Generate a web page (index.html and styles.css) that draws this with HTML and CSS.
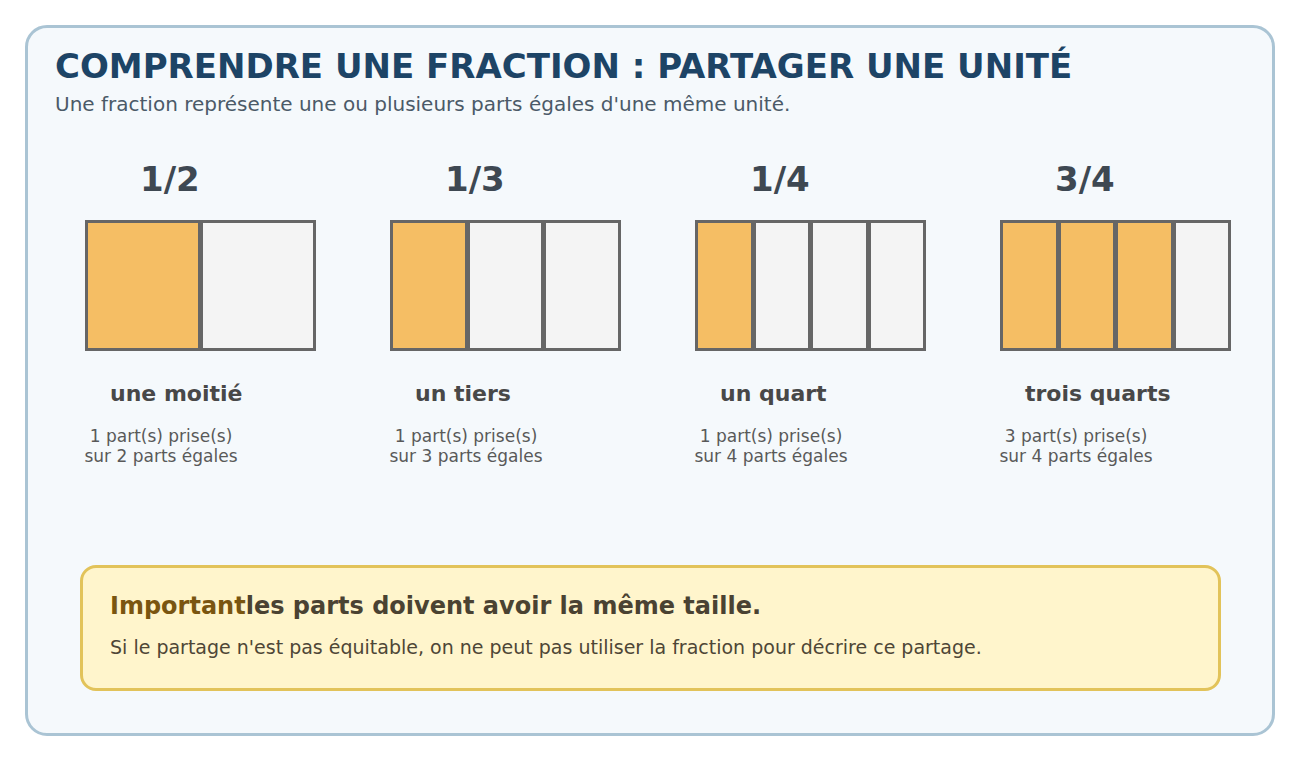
FILE: index.html
```html
<!DOCTYPE html>
<html lang="fr">
<head>
<meta charset="utf-8">
<title>Comprendre une fraction</title>
<link rel="stylesheet" href="styles.css">
</head>
<body>
<div class="page">
  <div class="card">
    <h1 class="title">COMPRENDRE UNE FRACTION : PARTAGER UNE UNITÉ</h1>
    <p class="subtitle">Une fraction représente une ou plusieurs parts égales d'une même unité.</p>

    <div class="fractions">
      <div class="frac">
        <div class="frac-label">1/2</div>
        <div class="bar">
          <span class="part on"></span><span class="part"></span>
        </div>
        <div class="frac-name">une moitié</div>
        <div class="frac-desc">1 part(s) prise(s)<br>sur 2 parts égales</div>
      </div>
      <div class="frac">
        <div class="frac-label">1/3</div>
        <div class="bar">
          <span class="part on"></span><span class="part"></span><span class="part"></span>
        </div>
        <div class="frac-name">un tiers</div>
        <div class="frac-desc">1 part(s) prise(s)<br>sur 3 parts égales</div>
      </div>
      <div class="frac">
        <div class="frac-label">1/4</div>
        <div class="bar">
          <span class="part on"></span><span class="part"></span><span class="part"></span><span class="part"></span>
        </div>
        <div class="frac-name">un quart</div>
        <div class="frac-desc">1 part(s) prise(s)<br>sur 4 parts égales</div>
      </div>
      <div class="frac">
        <div class="frac-label">3/4</div>
        <div class="bar">
          <span class="part on"></span><span class="part on"></span><span class="part on"></span><span class="part"></span>
        </div>
        <div class="frac-name">trois quarts</div>
        <div class="frac-desc">3 part(s) prise(s)<br>sur 4 parts égales</div>
      </div>
    </div>

    <div class="note">
      <div class="note-head"><strong class="note-key">Important</strong>les parts doivent avoir la même taille.</div>
      <p class="note-body">Si le partage n'est pas équitable, on ne peut pas utiliser la fraction pour décrire ce partage.</p>
    </div>
  </div>
</div>
</body>
</html>
```

FILE: styles.css
```css
html, body {
  margin: 0;
  padding: 0;
  background: #ffffff;
}

body {
  font-family: "DejaVu Sans", "Noto Sans", sans-serif;
}

.page {
  padding: 25px;
}

.card {
  box-sizing: border-box;
  width: 1250px;
  height: 711px;
  border: 3px solid #aac4d4;
  border-radius: 22px;
  background: #f5f9fc;
  padding: 18px 27px 0 27px;
}

.title {
  margin: 0;
  font-size: 34px;
  line-height: 40px;
  font-weight: bold;
  color: #1d4466;
}

.subtitle {
  margin: 6px 0 0 0;
  font-size: 20px;
  line-height: 24px;
  color: #4b5a68;
}

.fractions {
  display: flex;
  gap: 74px;
  margin: 43px 0 0 30px;
}

.frac {
  width: 231px;
}

.frac-label {
  padding-left: 55px;
  font-size: 34px;
  line-height: 40px;
  font-weight: bold;
  color: #3e4852;
}

.bar {
  margin-top: 21px;
  box-sizing: border-box;
  width: 231px;
  height: 131px;
  border: 3px solid #666666;
  background: #666666;
  display: flex;
  gap: 5px;
}

.part {
  flex: 1;
  background: #f4f4f4;
}

.part.on {
  background: #f5be64;
}

.frac-name {
  margin-top: 30px;
  padding-left: 25px;
  font-size: 22px;
  line-height: 26px;
  font-weight: bold;
  color: #484848;
}

.frac-desc {
  margin: 19px 0 0 -4px;
  width: 160px;
  white-space: nowrap;
  text-align: center;
  font-size: 17px;
  line-height: 20px;
  color: #595959;
}

.note {
  box-sizing: border-box;
  width: 1141px;
  height: 126px;
  margin: 99px 0 0 25px;
  border: 3px solid #e2c35a;
  border-radius: 16px;
  background: #fff5cc;
  padding: 24px 27px 0 27px;
}

.note-head {
  font-size: 24px;
  line-height: 28px;
  font-weight: bold;
  color: #4a4232;
}

.note-key {
  color: #7a5510;
}

.note-body {
  margin: 16px 0 0 0;
  font-size: 19px;
  line-height: 22px;
  color: #4e4636;
}
```
